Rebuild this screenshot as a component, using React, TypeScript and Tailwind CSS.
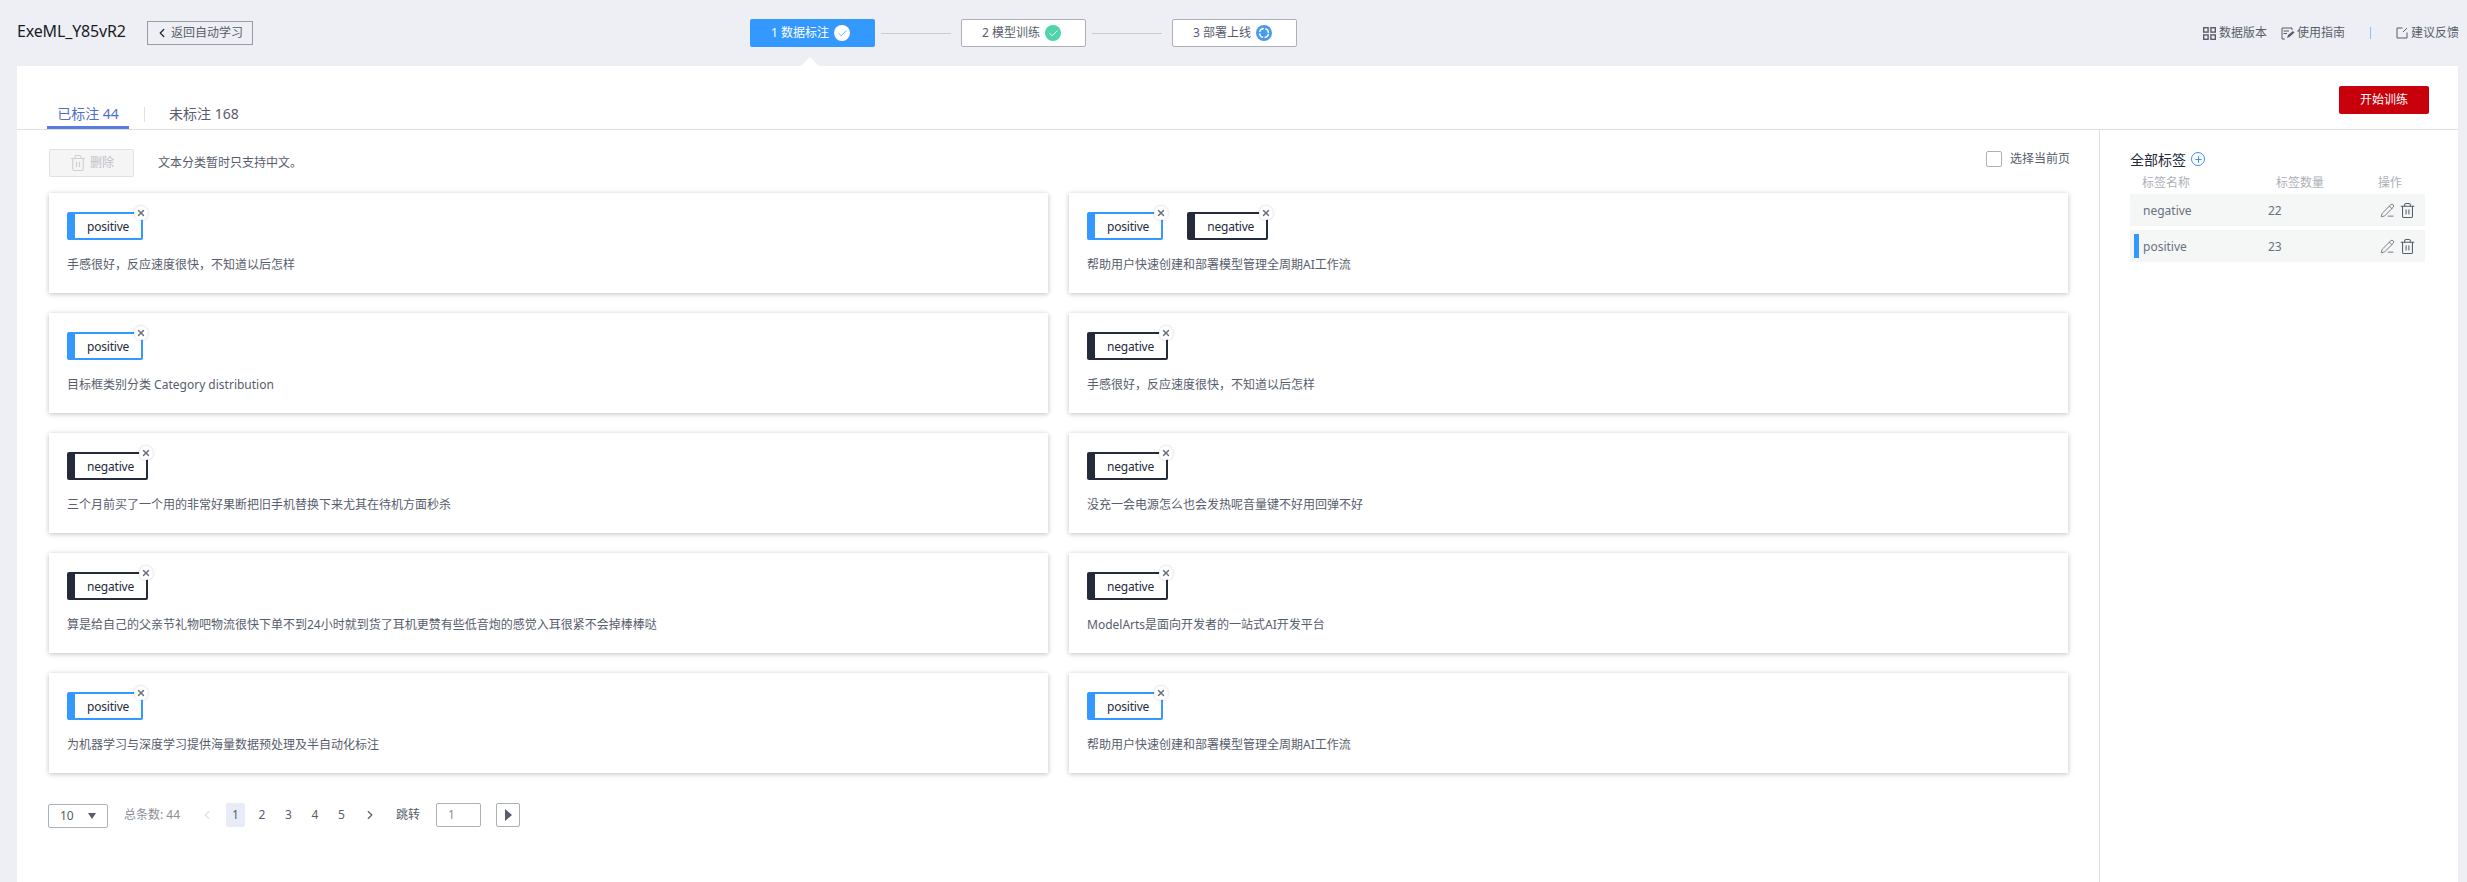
import { ChevronLeft, ChevronRight, Check, Plus, X, Trash2, PencilLine } from "lucide-react";

const FONT = "font-['Noto_Sans','Noto_Sans_CJK_SC',sans-serif]";

type Item = { tags: ("positive" | "negative")[]; text: string };

// left and right column, row by row
const CARDS: Item[] = [
  { tags: ["positive"], text: "手感很好，反应速度很快，不知道以后怎样" },
  { tags: ["positive", "negative"], text: "帮助用户快速创建和部署模型管理全周期AI工作流" },
  { tags: ["positive"], text: "目标框类别分类 Category distribution" },
  { tags: ["negative"], text: "手感很好，反应速度很快，不知道以后怎样" },
  { tags: ["negative"], text: "三个月前买了一个用的非常好果断把旧手机替换下来尤其在待机方面秒杀" },
  { tags: ["negative"], text: "没充一会电源怎么也会发热呢音量键不好用回弹不好" },
  { tags: ["negative"], text: "算是给自己的父亲节礼物吧物流很快下单不到24小时就到货了耳机更赞有些低音炮的感觉入耳很紧不会掉棒棒哒" },
  { tags: ["negative"], text: "ModelArts是面向开发者的一站式AI开发平台" },
  { tags: ["positive"], text: "为机器学习与深度学习提供海量数据预处理及半自动化标注" },
  { tags: ["positive"], text: "帮助用户快速创建和部署模型管理全周期AI工作流" },
];

function Tag({ name }: { name: "positive" | "negative" }) {
  const positive = name === "positive";
  return (
    <div
      className={`relative flex items-center h-[28px] rounded-[2px] border-y-[2px] border-r-[2px] border-l-[8px] px-[12px] pt-[1px] text-[12px] tracking-[-0.2px] text-[#252b3a] ${positive ? "border-[#3399ff]" : "border-[#252b3a]"}`}
    >
      {name}
      <span className="absolute -top-[8px] -right-[7px] flex items-center justify-center size-[14px] rounded-full bg-white shadow-[0_0_3px_rgba(0,0,0,0.2)]">
        <X className="size-[10px] text-[#6b7080]" strokeWidth={3.5} />
      </span>
    </div>
  );
}

function Card({ item }: { item: Item }) {
  return (
    <div className="h-[100px] bg-white px-[18px] pt-[19px] shadow-[0_1px_5px_rgba(0,0,0,0.25)]">
      <div className="flex gap-[24px]">
        {item.tags.map((t) => (
          <Tag key={t} name={t} />
        ))}
      </div>
      <p className="mt-[15px] text-[12px] leading-[20px] text-[#575d6c]">{item.text}</p>
    </div>
  );
}

function Step({ label, active, children }: { label: string; active?: boolean; children: React.ReactNode }) {
  return (
    <div
      className={`relative flex items-center justify-center gap-[5px] w-[125px] h-[28px] pr-[4px] rounded-[2px] text-[12px] ${active ? "bg-[#3399ff] text-white" : "bg-white border border-[#adb0b8] text-[#575d6c]"}`}
    >
      {label}
      {children}
      {active && (
        <span className="absolute left-[50px] top-[38px] border-x-[10px] border-b-[10px] border-x-transparent border-b-white" />
      )}
    </div>
  );
}

function StepLine() {
  return <div className="w-[70px] h-px ml-[6px] mr-[10px] bg-[#c8cad0]" />;
}

function DeployIcon() {
  return (
    <svg viewBox="0 0 16 16" className="size-[16px]">
      <circle cx="8" cy="8" r="8" fill="#4a9bf0" />
      <circle cx="8" cy="8" r="4.5" fill="none" stroke="#fff" strokeWidth="1.4" strokeDasharray="5.5 1.57" strokeDashoffset="-0.8" />
    </svg>
  );
}

function GridIcon() {
  return (
    <svg viewBox="0 0 13 13" className="size-[13px]" fill="none" stroke="#575d6c" strokeWidth="1.4">
      <rect x="0.7" y="0.7" width="4.4" height="4.4" />
      <rect x="7.9" y="0.7" width="4.4" height="4.4" />
      <rect x="0.7" y="7.9" width="4.4" height="4.4" />
      <rect x="7.9" y="7.9" width="4.4" height="4.4" />
    </svg>
  );
}

function GuideIcon() {
  return (
    <svg viewBox="0 0 14 13" className="w-[14px] h-[13px]" fill="none" stroke="#575d6c" strokeWidth="1">
      <path d="M4 12H1V1h10v2" />
      <path d="M2.5 4H8M2.5 6.5H6" />
      <path d="M6 11l1-3 5-4 1.5 1.5-5 4.5z" fill="#575d6c" stroke="none" />
    </svg>
  );
}

function FeedbackIcon() {
  return (
    <svg viewBox="0 0 12 12" className="size-[12px]" fill="none" stroke="#575d6c" strokeWidth="1">
      <path d="M6.5 1H1v10h10V5.5" />
      <path d="M7 5l4-4" />
    </svg>
  );
}

function Header() {
  return (
    <div className="flex items-center h-[66px] pl-[17px] pr-[8px] shrink-0">
      <span className="w-[108px] text-[16px] leading-[24px] tracking-[-0.15px] text-[#191c24] -mt-[4px] whitespace-nowrap">ExeML_Y85vR2</span>
      <button className="ml-[22px] flex items-center h-[24px] w-[106px] pl-[8px] border border-[#9a9ca5] text-[12px] text-[#575d6c] gap-[2px]">
        <ChevronLeft className="size-[14px] text-[#252b3a] -ml-[1px]" strokeWidth={2.25} />
        返回自动学习
      </button>
      <div className="ml-[497px] flex items-center">
        <Step label="1 数据标注" active>
          <span className="flex items-center justify-center size-[16px] rounded-full bg-white text-[#3399ff]">
            <Check className="size-[11px]" strokeWidth={1.5} />
          </span>
        </Step>
        <StepLine />
        <Step label="2 模型训练">
          <span className="flex items-center justify-center size-[16px] rounded-full bg-[#50d4ab] text-white">
            <Check className="size-[11px]" strokeWidth={2} />
          </span>
        </Step>
        <StepLine />
        <Step label="3 部署上线">
          <DeployIcon />
        </Step>
      </div>
      <div className="ml-auto flex items-center text-[12px] text-[#575d6c]">
        <GridIcon />
        <span className="ml-[3px]">数据版本</span>
        <span className="ml-[14px]">
          <GuideIcon />
        </span>
        <span className="ml-[2px]">使用指南</span>
        <span className="ml-[25px] w-px h-[12px] bg-[#8fc0f5]" />
        <span className="ml-[25px]">
          <FeedbackIcon />
        </span>
        <span className="ml-[3px]">建议反馈</span>
      </div>
    </div>
  );
}

function Tabs() {
  return (
    <div className="relative flex items-end h-[64px] border-b border-[#dfe0e3] shrink-0">
      <div className="ml-[30px] w-[82px] h-[36px] pt-[7px] flex items-center justify-center border-b-[3px] border-[#5a7be0] text-[14px] text-[#526ecc]">
        已标注 44
      </div>
      <div className="ml-[15px] mb-[7px] w-px h-[15px] bg-[#dfe1e6]" />
      <div className="ml-[24px] h-[36px] pt-[7px] pb-[3px] flex items-center text-[14px] text-[#575d6c]">未标注 168</div>
      <button className="absolute right-[29px] top-[20px] w-[90px] h-[28px] rounded-[2px] bg-[#c7000b] text-[12px] text-white">
        开始训练
      </button>
    </div>
  );
}

function Toolbar() {
  return (
    <div className="flex items-center h-[28px] mt-[19px] pr-[14px]">
      <button className="flex items-center justify-center gap-[3px] w-[85px] h-[28px] rounded-[2px] bg-[#f5f5f6] border border-[#dfe1e6] text-[12px] text-[#bfc1c7]">
        <Trash2 className="size-[18px] text-[#cfd0d5]" strokeWidth={1.5} />
        删除
      </button>
      <span className="ml-[24px] text-[12px] text-[#575d6c]">文本分类暂时只支持中文。</span>
      <label className="ml-auto flex items-center gap-[8px] -mt-[8px] mr-[15px] text-[12px] text-[#575d6c]">
        <span className="size-[16px] border border-[#adb0b8] rounded-[2px] bg-white" />
        选择当前页
      </label>
    </div>
  );
}

function Pager() {
  return (
    <div className="flex items-start h-[24px] mt-[30px] -ml-[1px] text-[12px] text-[#575d6c]">
      <div className="flex items-center justify-between w-[60px] h-[24px] mt-[1px] border border-[#adb0b8] rounded-[2px] px-[11px]">
        10
        <span className="border-x-[4px] border-t-[6px] border-x-transparent border-t-[#575d6c]" />
      </div>
      <span className="ml-[16px] w-[56px] leading-[24px] whitespace-nowrap text-[#8a8e99]">总条数: 44</span>
      <ChevronLeft className="ml-[20px] mt-[5px] size-[14px] text-[#dfe1e6]" strokeWidth={2} />
      <div className="ml-[12px] flex items-center gap-[7.5px]">
        <span className="flex items-center justify-center w-[19px] h-[24px] rounded-[2px] bg-[#e8ecf8]">1</span>
        {[2, 3, 4, 5].map((n) => (
          <span key={n} className="flex items-center justify-center w-[19px] h-[24px]">
            {n}
          </span>
        ))}
      </div>
      <ChevronRight className="ml-[12px] mt-[5px] size-[14px] text-[#575d6c]" strokeWidth={2} />
      <span className="ml-[19px] w-[24px] leading-[24px] whitespace-nowrap">跳转</span>
      <div className="ml-[16px] flex items-center w-[45px] h-[24px] pl-[11px] border border-[#adb0b8] rounded-[2px] text-[#8a8e99]">1</div>
      <button className="ml-[15px] flex items-center justify-center w-[24px] h-[24px] border border-[#adb0b8] rounded-[2px]">
        <span className="border-y-[6px] border-l-[7px] border-y-transparent border-l-[#575d6c]" />
      </button>
    </div>
  );
}

function LabelRow({ name, count, marked }: { name: string; count: number; marked?: boolean }) {
  return (
    <div className="relative flex items-center h-[32px] bg-[#f5f7f7] text-[12px] text-[#6b7080]">
      {marked && <span className="absolute left-[4px] top-[4px] w-[5px] h-[24px] bg-[#3399ff]" />}
      <span className="ml-[13px] w-[125px] pt-[1px]">{name}</span>
      <span className="w-[112px] pt-[1px]">{count}</span>
      <PencilLine className="size-[15px] text-[#575d6c]" strokeWidth={1.25} />
      <Trash2 className="ml-[4px] size-[17px] text-[#575d6c]" strokeWidth={1.5} />
    </div>
  );
}

function Sidebar() {
  return (
    <div className="flex-1 pl-[30px] pr-[33px] pt-[18px]">
      <div className="flex items-center gap-[5px] h-[22px] text-[14px] text-[#252b3a]">
        全部标签
        <span className="flex items-center justify-center size-[14px] rounded-full border-[1.5px] border-[#3b8ff0]">
          <Plus className="size-[9px] text-[#3b8ff0]" strokeWidth={3} />
        </span>
      </div>
      <div className="flex items-center h-[22px] mt-[2px] text-[12px] text-[#adb0b8]">
        <span className="ml-[12px] w-[134px]">标签名称</span>
        <span className="w-[102px]">标签数量</span>
        <span>操作</span>
      </div>
      <div className="flex flex-col gap-[4px]">
        <LabelRow name="negative" count={22} />
        <LabelRow name="positive" count={23} marked />
      </div>
    </div>
  );
}

export default function App() {
  return (
    <div className={`flex flex-col h-[882px] overflow-hidden bg-[#eeeff5] ${FONT}`}>
      <Header />
      <div className="flex flex-col flex-1 min-h-0 ml-[17px] mr-[9px] bg-white">
        <Tabs />
        <div className="flex flex-1 min-h-0">
          <div className="w-[2083px] pl-[32px] border-r border-[#dfe0e3] shrink-0">
            <Toolbar />
            <div className="grid grid-cols-[999px_999px] gap-x-[21px] gap-y-[20px] mt-[16px]">
              {CARDS.map((item, i) => (
                <Card key={i} item={item} />
              ))}
            </div>
            <Pager />
          </div>
          <Sidebar />
        </div>
      </div>
    </div>
  );
}
